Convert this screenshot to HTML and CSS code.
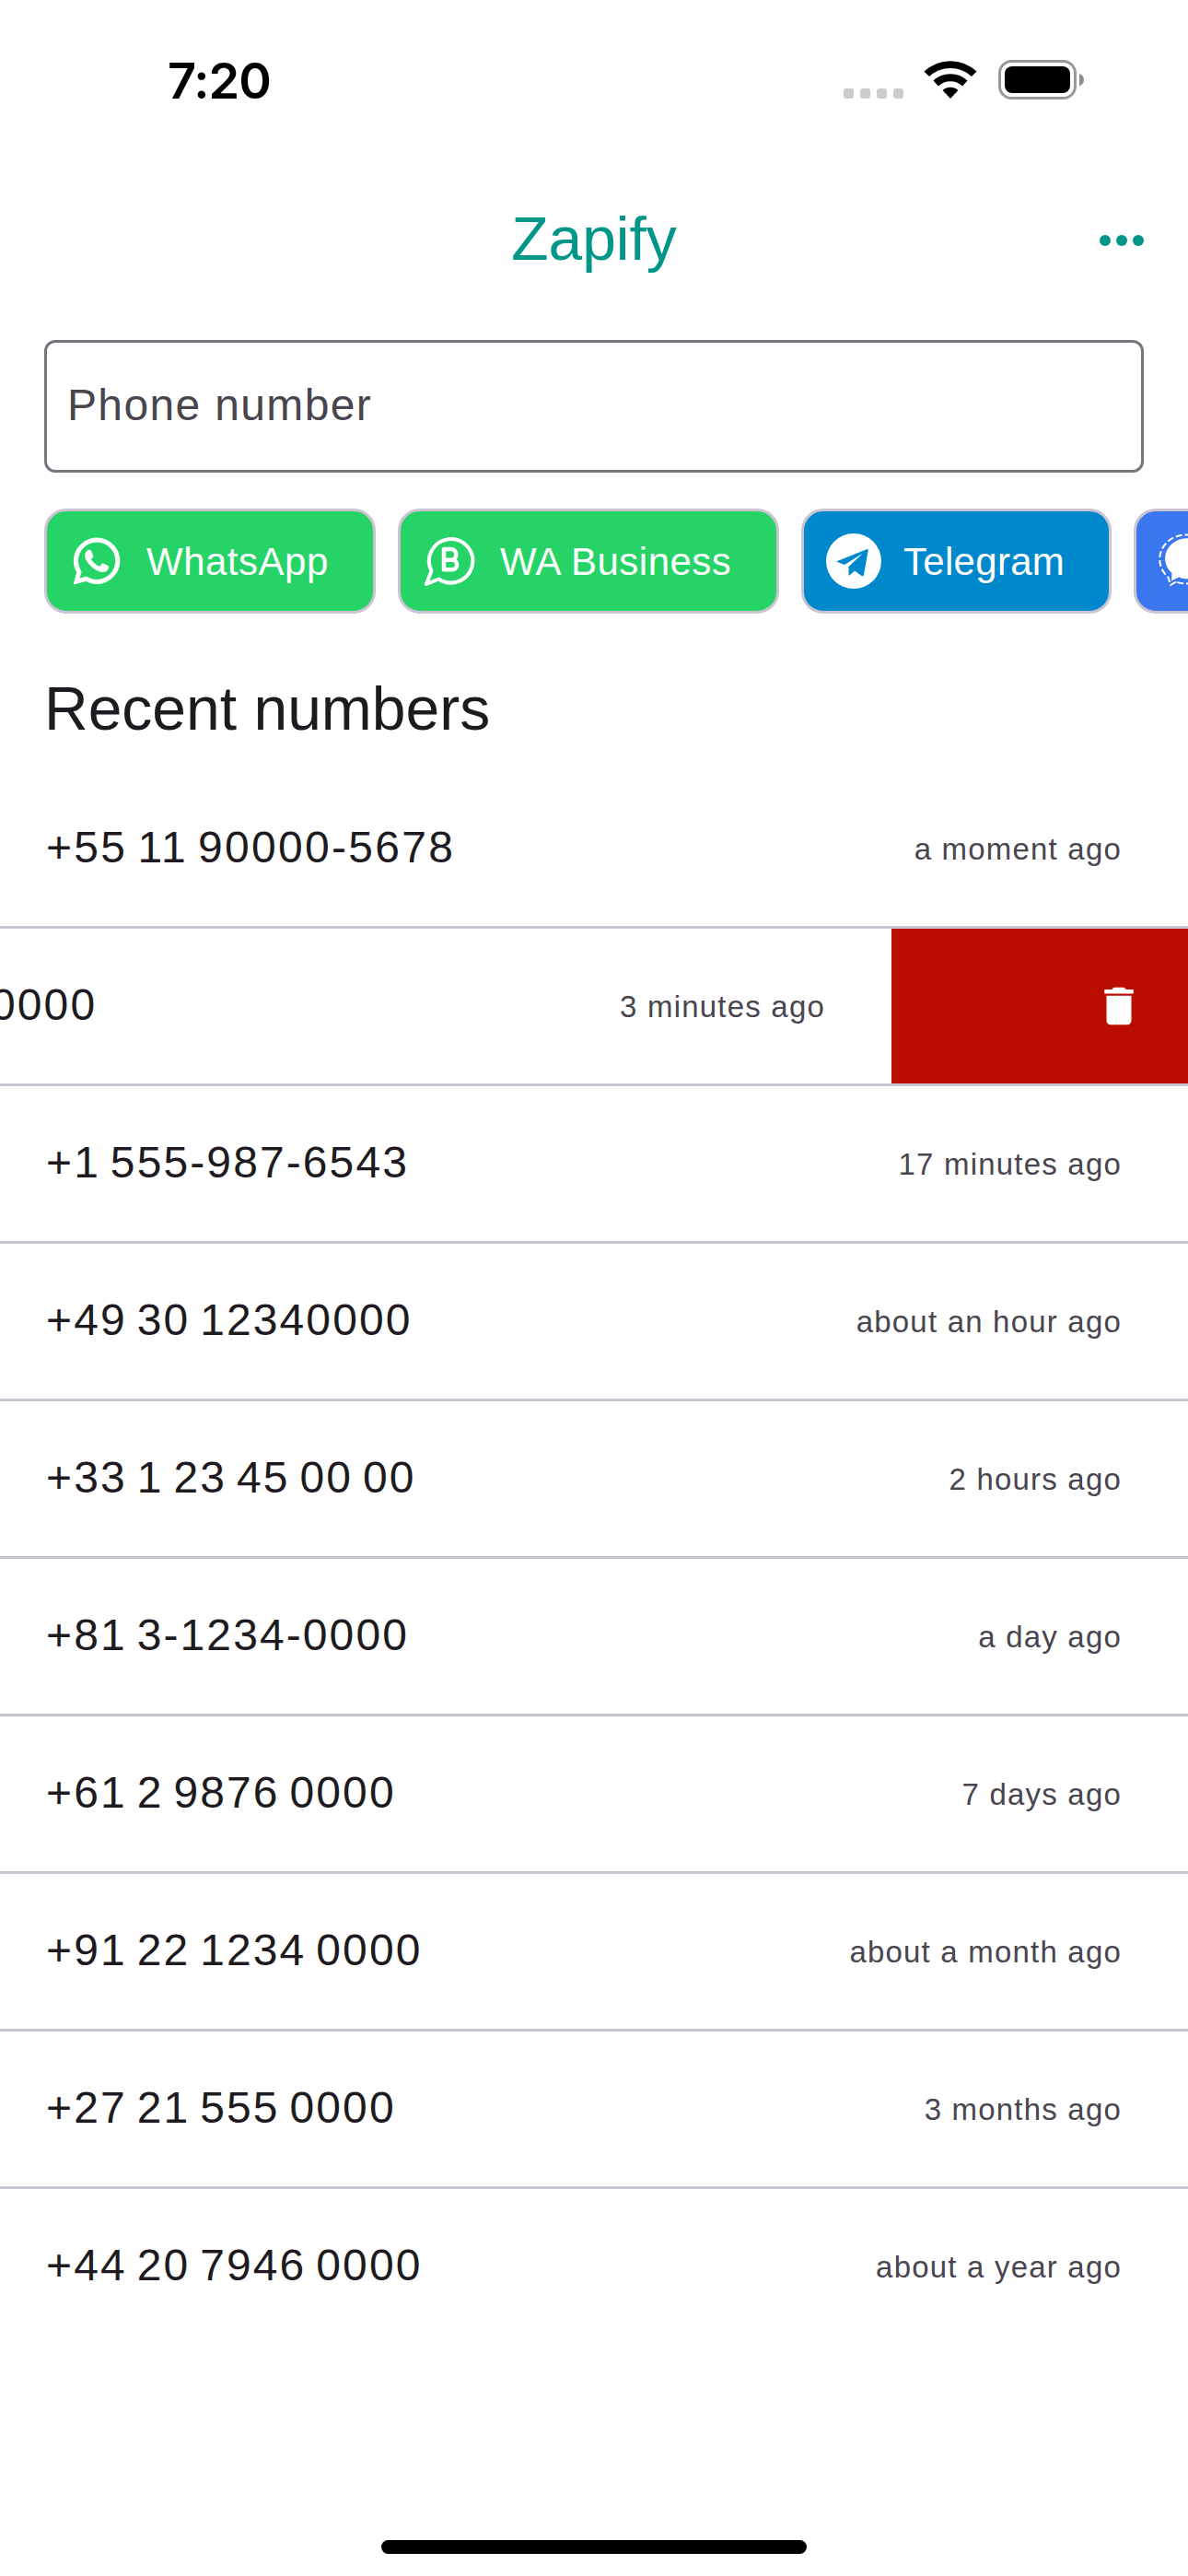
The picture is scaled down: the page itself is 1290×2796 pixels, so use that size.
FILE: index.html
```html
<!DOCTYPE html>
<html lang="en">
<head>
<meta charset="utf-8">
<title>Zapify</title>
<link rel="stylesheet" href="styles.css">
</head>
<body>
<div class="screen">
  <header class="status">
    <span class="clock">7:20</span>
    <div class="indicators">
      <div class="signal"><i></i><i></i><i></i><i></i></div>
      <svg class="wifi" width="58" height="43" viewBox="0 0 58 43"><path d="M.5 12.500A42 42 0 0 1 57.500 12.500L52 18A34 34 0 0 0 6 18ZM10.500 22.500A27 27 0 0 1 47.500 22.500L42 28.500A19 19 0 0 0 16 28.500ZM20.500 33A13 13 0 0 1 37.500 33L29 42Z"/></svg>
      <svg class="battery" width="94" height="44" viewBox="0 0 94 44"><rect x="1.500" y="1.500" width="82" height="40" rx="13" fill="none" stroke="#999" stroke-width="3"/><rect x="7" y="7" width="71" height="29" rx="8"/><path d="M88 15Q93 17 93 21.500T88 28.500Z" fill="#8c8c8c"/></svg>
    </div>
  </header>

  <div class="appbar">
    <h1>Zapify</h1>
    <div class="more"><i></i><i></i><i></i></div>
  </div>

  <div class="field">Phone number</div>

  <div class="chips">
    <div class="chip whatsapp">
      <svg width="60" height="60" viewBox="0 0 24 24"><path fill="#fff" stroke="#fff" stroke-width=".35" d="M12.040 2C6.580 2 2.130 6.450 2.130 11.910c0 1.750.46 3.450 1.320 4.950L2.050 22l5.250-1.380a9.900 9.900 0 0 0 4.740 1.210c5.460 0 9.910-4.450 9.910-9.910A9.820 9.820 0 0 0 12.040 2m.01 1.670c2.200 0 4.260.86 5.820 2.420a8.230 8.230 0 0 1 2.410 5.830c0 4.540-3.700 8.230-8.240 8.230-1.480 0-2.930-.39-4.190-1.150l-.3-.17-3.120.82.83-3.040-.2-.32a8.190 8.190 0 0 1-1.260-4.380c.01-4.540 3.700-8.240 8.250-8.240M8.530 7.330c-.16 0-.43.060-.66.310-.22.250-.87.860-.87 2.070 0 1.220.89 2.390 1 2.560.14.170 1.760 2.670 4.250 3.730.59.270 1.050.42 1.410.53.590.19 1.130.16 1.560.1.480-.070 1.460-.6 1.670-1.180s.21-1.070.15-1.180c-.070-.1-.23-.16-.48-.27-.25-.14-1.470-.74-1.690-.82-.23-.080-.37-.12-.56.120-.16.250-.64.810-.78.970-.15.170-.29.190-.53.070-.26-.13-1.060-.39-2-1.230-.74-.66-1.230-1.470-1.380-1.720-.12-.24-.010-.39.11-.5.110-.11.270-.29.370-.44.130-.14.170-.25.250-.41.080-.17.040-.31-.020-.43-.060-.11-.56-1.350-.77-1.840-.2-.48-.4-.42-.56-.43-.14 0-.3-.010-.47-.010"/></svg>
      <span>WhatsApp</span>
    </div>
    <div class="chip business">
      <svg width="60" height="60" viewBox="0 0 60 60" fill="none" stroke="#fff" stroke-width="4" stroke-linejoin="round"><path d="M4 55L9.500 40.500A23.700 23.700 0 1 1 17.500 49.500Z"/><path stroke-width="4.500" d="M23 17H30.500A5.800 5.800 0 0 1 30.500 28.800H23ZM23 28.800H32A5.200 5.200 0 0 1 32 39.200H23Z"/></svg>
      <span>WA Business</span>
    </div>
    <div class="chip telegram">
      <svg width="60" height="60" viewBox="0 0 60 60"><circle cx="30" cy="30" r="30" fill="#fff"/><path fill="#0088cc" d="M11 30.500L44.500 17Q46 16.500 45.700 18.500L41 45Q40.500 47 38.500 46L31 40.500L25.500 45.500Q24.500 46 24.500 44.500V36L40 21.500L20 34Z"/></svg>
      <span>Telegram</span>
    </div>
    <div class="chip signal-app">
      <svg width="60" height="60" viewBox="0 0 60 60"><path fill="#fff" d="M14 51.500L14.500 43A24 22 0 1 1 22 47.500Z"/><path fill="none" stroke="#fff" stroke-width="2" stroke-dasharray="7 3" d="M19 52.500L13 56L10.500 47.500A28.500 26.500 0 1 1 19 52.500Z"/></svg>
    </div>
  </div>

  <h2>Recent numbers</h2>

  <div class="list">
    <div class="row first"><span class="number">+55 11 90000-5678</span><span class="time">a moment ago</span></div>
    <div class="row swiped">
      <span class="number">0000</span><span class="time">3 minutes ago</span>
      <div class="delete"><svg width="54" height="54" viewBox="0 0 24 24"><path fill="#fff" d="M19 4h-3.500l-1-1h-5l-1 1H5v2h14M6 19a2 2 0 0 0 2 2h8a2 2 0 0 0 2-2V7H6z"/></svg></div>
    </div>
    <div class="row"><span class="number">+1 555-987-6543</span><span class="time">17 minutes ago</span></div>
    <div class="row"><span class="number">+49 30 12340000</span><span class="time">about an hour ago</span></div>
    <div class="row"><span class="number">+33 1 23 45 00 00</span><span class="time">2 hours ago</span></div>
    <div class="row"><span class="number">+81 3-1234-0000</span><span class="time">a day ago</span></div>
    <div class="row"><span class="number">+61 2 9876 0000</span><span class="time">7 days ago</span></div>
    <div class="row"><span class="number">+91 22 1234 0000</span><span class="time">about a month ago</span></div>
    <div class="row"><span class="number">+27 21 555 0000</span><span class="time">3 months ago</span></div>
    <div class="row"><span class="number">+44 20 7946 0000</span><span class="time">about a year ago</span></div>
  </div>

  <div class="home"></div>
</div>
</body>
</html>
```

FILE: styles.css
```css
* { box-sizing: border-box; }
body { margin: 0; background: #fff; }
.screen {
  width: 1290px;
  height: 2796px;
  overflow: hidden;
  display: flex;
  flex-direction: column;
  font-family: "Liberation Sans", Arial, sans-serif;
  color: #1d1b20;
}
svg { display: block; flex: none; }

.status {
  height: 177px;
  padding: 0 112px 0 182px;
  display: flex;
  justify-content: space-between;
}
.clock {
  margin-top: 55px;
  font: 600 54px/66px Inter, sans-serif;
  letter-spacing: -1px;
  color: #000;
}
.indicators { display: flex; padding-top: 65px; }
.signal { display: flex; gap: 7px; margin: 31px 22px 0 0; }
.signal i { width: 11px; height: 11px; border-radius: 3px; background: #ccc; }
.wifi { margin-right: 23px; }

.appbar {
  height: 168px;
  padding: 0 48px;
  display: grid;
  grid-template-columns: 1fr auto 1fr;
  align-items: center;
  color: #009688;
}
h1 { grid-column: 2; margin: 0 0 4px; font-size: 66px; font-weight: 400; line-height: 84px; }
.more { display: flex; gap: 6px; justify-self: end; }
.more i { width: 12px; height: 12px; border-radius: 50%; background: #009688; }

.field {
  margin: 24px 48px 0;
  height: 144px;
  padding-left: 22px;
  border: 3px solid #79747e;
  border-radius: 12px;
  font-size: 48px;
  line-height: 136px;
  letter-spacing: 1.35px;
  color: #49454f;
}

.chips { display: flex; gap: 24px; margin: 39px 0 0 48px; }
.chip {
  flex: none;
  height: 114px;
  display: flex;
  align-items: center;
  gap: 24px;
  padding-left: 24px;
  border: 3px solid #cac4d0;
  border-radius: 24px;
  color: #fff;
  font-size: 42px;
  letter-spacing: .5px;
}
.chip span { padding-top: 1px; }
.whatsapp { width: 360px; background: #25d366; }
.business { width: 414px; background: #25d366; }
.telegram { width: 337px; background: #0088cc; letter-spacing: .3px; }
.signal-app { width: 320px; background: #3a76f0; }

h2 {
  margin: 61px 48px 0;
  font-size: 66px;
  font-weight: 400;
  line-height: 84px;
}

.list { margin-top: 26px; }
.row {
  height: 171px;
  padding: 0 72px 0 50px;
  display: flex;
  align-items: center;
  justify-content: space-between;
  border-bottom: 3px solid #cac4d0;
}
.row:last-child { border-bottom-color: transparent; }
.number {
  padding-bottom: 3px;
  font-size: 48px;
  letter-spacing: 2.1px;
  word-spacing: -4.5px;
  white-space: nowrap;
}
.first .number { letter-spacing: 2.3px; }
.time {
  padding-top: 2px;
  font-size: 33px;
  letter-spacing: 1.2px;
  color: #49454f;
  white-space: nowrap;
}
.swiped { padding: 0; justify-content: flex-start; }
.swiped .number { margin-left: -10px; }
.swiped .time { margin-left: auto; margin-right: 72px; }
.delete {
  width: 322px;
  height: 100%;
  padding-right: 48px;
  display: flex;
  align-items: center;
  justify-content: flex-end;
  background: #b90e00;
}
.home {
  width: 462px;
  height: 15px;
  margin: auto auto 24px;
  border-radius: 8px;
  background: #000;
}
```
